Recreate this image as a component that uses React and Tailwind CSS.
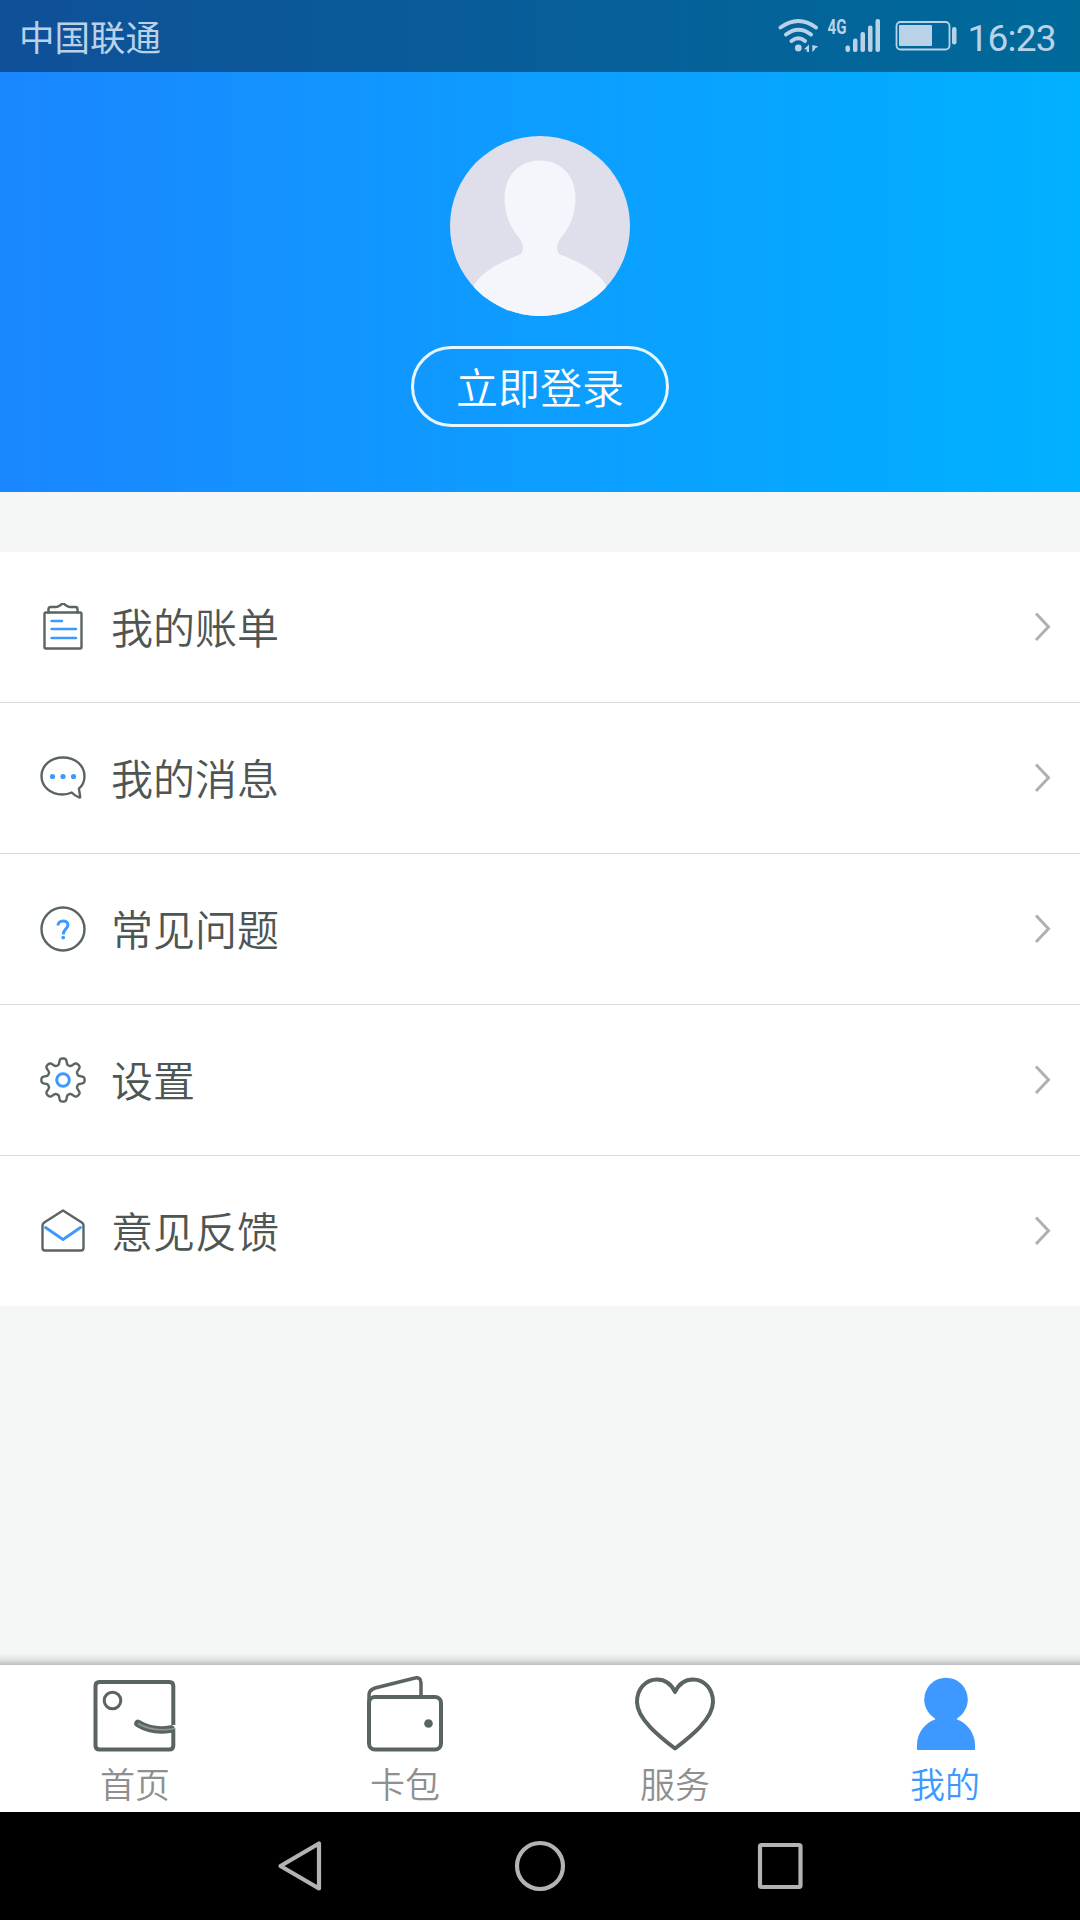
const STROKE = "#5a6462";
const BLUE = "#3d99ff";

function gearPath(cx, cy) {
  const points = Array.from({ length: 160 }).map((_, index) => {
    const angle = (index / 160) * Math.PI * 2;
    const r = 18.6 + 3 * (Math.tanh(1.9 * Math.cos(8 * angle)) / Math.tanh(1.9));
    return `${(cx + r * Math.cos(angle)).toFixed(2)} ${(cy + r * Math.sin(angle)).toFixed(2)}`;
  });
  return `M${points.join("L")}Z`;
}

function RowIcon({ children }) {
  return (
    <svg
      className="size-12 shrink-0"
      viewBox="0 0 48 48"
      fill="none"
      stroke={STROKE}
      strokeWidth="2.4"
      strokeLinecap="round"
      strokeLinejoin="round"
    >
      {children}
    </svg>
  );
}

function BillIcon() {
  return (
    <RowIcon>
      <rect x="5.5" y="9.5" width="37" height="36" rx="1.5" />
      <path d="M9.5 9.5V6Q9.5 4 11.5 4H17Q19 4 20.5 2.7L24 .2L27.5 2.7Q29 4 31 4H36.5Q38.5 4 38.5 6V9.5" />
      <path stroke={BLUE} d="M12.5 18H23M12.5 26H37M12.5 35H37" />
    </RowIcon>
  );
}

function MessageIcon() {
  return (
    <RowIcon>
      <path d="M24 3.5C11.5 3.5 2.5 11.7 2.5 22C2.5 32.5 11.5 40.500 23 40.500C26.5 40.5 30 39.8 32.7 38.5Q36 42 40.5 43.500Q41.5 43.5 41.2 42.500L39.9 34.700C43.7 31.5 45.5 27 45.5 22C45.5 11.7 36.5 3.5 24 3.5Z" />
      <g fill={BLUE} stroke="none">
        <circle cx="13.5" cy="22.5" r="2.6" />
        <circle cx="24" cy="22.5" r="2.6" />
        <circle cx="34.5" cy="22.5" r="2.6" />
      </g>
    </RowIcon>
  );
}

function QuestionIcon() {
  return (
    <RowIcon>
      <circle cx="24" cy="24" r="21.5" />
      <path
        stroke={BLUE}
        strokeWidth="3"
        strokeLinecap="butt"
        d="M19 20.500C19 14.5 29 14.5 29 20C29 24 24.200 24 24.200 29.5"
      />
      <circle cx="24.2" cy="32.6" r="1.9" fill={BLUE} stroke="none" />
    </RowIcon>
  );
}

function GearIcon() {
  return (
    <RowIcon>
      <path d={gearPath(24, 24)} />
      <circle cx="24" cy="24" r="6.3" stroke={BLUE} strokeWidth="3" />
    </RowIcon>
  );
}

function FeedbackIcon() {
  return (
    <RowIcon>
      <path d="M24 3.500L42.8 15.5Q44.5 16.700 44.5 18.500V41Q44.5 43.5 42 43.5H6Q3.500 43.5 3.500 41V18.5Q3.500 16.700 5.200 15.5Z" />
      <path stroke={BLUE} strokeWidth="2.8" d="M6.5 20.5L24 32.500L41.500 20.5" />
    </RowIcon>
  );
}

const menu = [
  { label: "我的账单", Icon: BillIcon },
  { label: "我的消息", Icon: MessageIcon },
  { label: "常见问题", Icon: QuestionIcon },
  { label: "设置", Icon: GearIcon },
  { label: "意见反馈", Icon: FeedbackIcon },
];

function TabIcon({ children, ...props }) {
  return (
    <svg
      className="h-20 w-24"
      viewBox="0 0 96 80"
      fill="none"
      stroke={STROKE}
      strokeWidth="4"
      strokeLinejoin="round"
      {...props}
    >
      {children}
    </svg>
  );
}

function HomeIcon() {
  return (
    <TabIcon>
      <path d="M86.300 51V12Q86.300 8 82.300 8H12.500Q8.500 8 8.500 12V71.500Q8.500 75.500 12.500 75.500H82.300Q86.300 75.500 86.300 71.500V54" />
      <circle cx="25.500" cy="26.500" r="8.300" strokeWidth="3" />
      <path d="M51 49.500Q66 58.500 84 55" strokeWidth="7.500" strokeLinecap="round" />
      <path d="M51 49.500Q66 58.500 88 54.500" stroke="#8f9896" strokeWidth="1.500" />
    </TabIcon>
  );
}

function WalletIcon() {
  return (
    <TabIcon>
      <rect x="12" y="23" width="72" height="52.500" rx="6" />
      <path d="M12 30V21Q12 16 18 14L57 4.200Q64 2.500 64 9V23" strokeWidth="3.500" />
      <circle cx="71.500" cy="49.500" r="4.300" fill={STROKE} stroke="none" />
    </TabIcon>
  );
}

function HeartIcon() {
  return (
    <TabIcon>
      <path d="M48 18C44 9.500 38 5.500 30 5.500C18.500 5.500 10 15 10 28C10 45 33 63 48 74.500C63 63 86 45 86 28C86 15 77.500 5.500 66 5.500C58 5.500 52 9.500 48 18Z" />
    </TabIcon>
  );
}

function MineIcon() {
  return (
    <TabIcon fill={BLUE} stroke="none">
      <circle cx="49" cy="25.500" r="21.800" />
      <path d="M20 76V71C20 59 28 49 38 45.500V43H60V45.500C70 49 78 59 78 71V76Z" />
    </TabIcon>
  );
}

const tabs = [
  { label: "首页", Icon: HomeIcon },
  { label: "卡包", Icon: WalletIcon },
  { label: "服务", Icon: HeartIcon },
  { label: "我的", Icon: MineIcon, active: true },
];

function StatusBar() {
  return (
    <div className="flex h-[72px] items-center justify-between bg-black/40 pr-2.5 pl-[19px] text-[#b9d2e8]">
      <span className="text-[35.5px] leading-none">中国联通</span>
      <div className="flex items-center">
        <svg className="h-[72px] w-[184px]" viewBox="776 0 184 72" fill="none" stroke="currentColor" strokeLinecap="round">
          <g strokeWidth="4">
            <path d="M780.500 27.500Q798.500 14.500 816 27.500" />
            <path d="M786 34.500Q798.500 25 811 34.500" />
            <path d="M791.500 41Q798.500 35.500 805 41" />
          </g>
          <g fill="currentColor" stroke="none">
            <circle cx="798.300" cy="48" r="3.400" />
            <path d="M809 44.500V52H806.800V49.500L804 49.300ZM812.300 45L818.500 46.500L815 48.500V49.500L812.300 52Z" />
            <text x="827.500" y="34" textLength="19" lengthAdjust="spacingAndGlyphs" className="font-['Roboto'] text-[21px] font-bold">
              4G
            </text>
            <rect x="845.500" y="45.500" width="4.500" height="6.500" rx="2" />
            <rect x="853" y="38.500" width="4.500" height="13.500" rx="2" />
            <rect x="860.500" y="32" width="4.500" height="20" rx="2" />
            <rect x="868" y="25.500" width="4.500" height="26.500" rx="2" />
            <rect x="875.500" y="19" width="4.500" height="33" rx="2" />
            <rect x="899" y="25" width="33" height="21" rx="1" />
            <rect x="952" y="27" width="4.500" height="17.500" rx="2.200" />
          </g>
          <rect x="896.500" y="22" width="53" height="27.500" rx="4" strokeWidth="1.800" />
        </svg>
        <svg className="h-[72px] w-[110px]" viewBox="960 0 110 72" fill="currentColor">
          <text x="967.500" y="50.500" textLength="89" className="font-['Roboto'] text-[37px]">
            16:23
          </text>
        </svg>
      </div>
    </div>
  );
}

function Avatar() {
  return (
    <svg className="size-[180px]" viewBox="0 0 180 180">
      <clipPath id="avatar">
        <circle cx="90" cy="90" r="90" />
      </clipPath>
      <g clipPath="url(#avatar)">
        <rect width="180" height="180" fill="#dfdfeb" />
        <path
          fill="#f5f6fc"
          d="M90 24.500C69 24.500 54.500 40 54.500 62C54.500 80 61 92 70 103C74 108 74 116 70 118.500C55 124 33 134 24 149V180H156V149C147 134 125 124 110 118.500C106 116 106 108 110 103C119 92 125.500 80 125.500 62C125.500 40 111 24.500 90 24.500Z"
        />
      </g>
    </svg>
  );
}

function MenuRow({ label, Icon }) {
  return (
    <li className="flex h-[151px] items-center border-b border-[#d9dada] bg-white pr-[29px] pl-[39px] last:h-[150px] last:border-b-0">
      <Icon />
      <span className="grow pb-0.5 pl-6 text-[42px] leading-none font-[350] text-[#4e5654]">{label}</span>
      <svg className="h-[30px] w-[18px]" viewBox="0 0 18 30" fill="none" stroke="#b0b0b0" strokeWidth="3">
        <path d="M3 1.500L15.500 14.700L3 28" />
      </svg>
    </li>
  );
}

export default function App() {
  return (
    <div className="flex h-[1920px] w-[1080px] flex-col overflow-hidden bg-[#f5f7f7] font-['Noto_Sans_CJK_SC',sans-serif]">
      <header className="h-[492px] bg-linear-to-r from-[#1a86ff] via-[#0d9dff] to-[#00b1ff]">
        <StatusBar />
        <div className="flex flex-col items-center pt-16">
          <Avatar />
          <button className="mt-[30px] h-[81px] w-[258px] rounded-full border-3 border-white/90 pb-0.5 text-[42px] leading-none font-[350] text-white">
            立即登录
          </button>
        </div>
      </header>

      <ul className="mt-[60px]">
        {menu.map((item) => (
          <MenuRow key={item.label} {...item} />
        ))}
      </ul>

      <div className="mt-auto h-3 bg-linear-to-b from-[#f5f7f7] via-[#e4e6e6] to-[#bdbebe]" />
      <nav className="grid h-[147px] grid-cols-4 bg-white">
        {tabs.map(({ label, Icon, active }) => (
          <div key={label} className="flex flex-col items-center pt-[9px]">
            <Icon />
            <span className={`mt-[11px] text-[35px] leading-none font-[350] ${active ? "text-[#3d99ff]" : "text-[#8f8f8f]"}`}>
              {label}
            </span>
          </div>
        ))}
      </nav>

      <div className="flex h-[108px] items-center justify-center bg-black">
        <svg className="h-[108px] w-[600px]" viewBox="240 0 600 108" fill="none" stroke="#b3b3b3" strokeWidth="4.200" strokeLinejoin="round">
          <path d="M280.500 54L319 31.500V76.500Z" />
          <circle cx="540" cy="54" r="23" />
          <rect x="760" y="33" width="40.500" height="42" rx="1.500" />
        </svg>
      </div>
    </div>
  );
}
